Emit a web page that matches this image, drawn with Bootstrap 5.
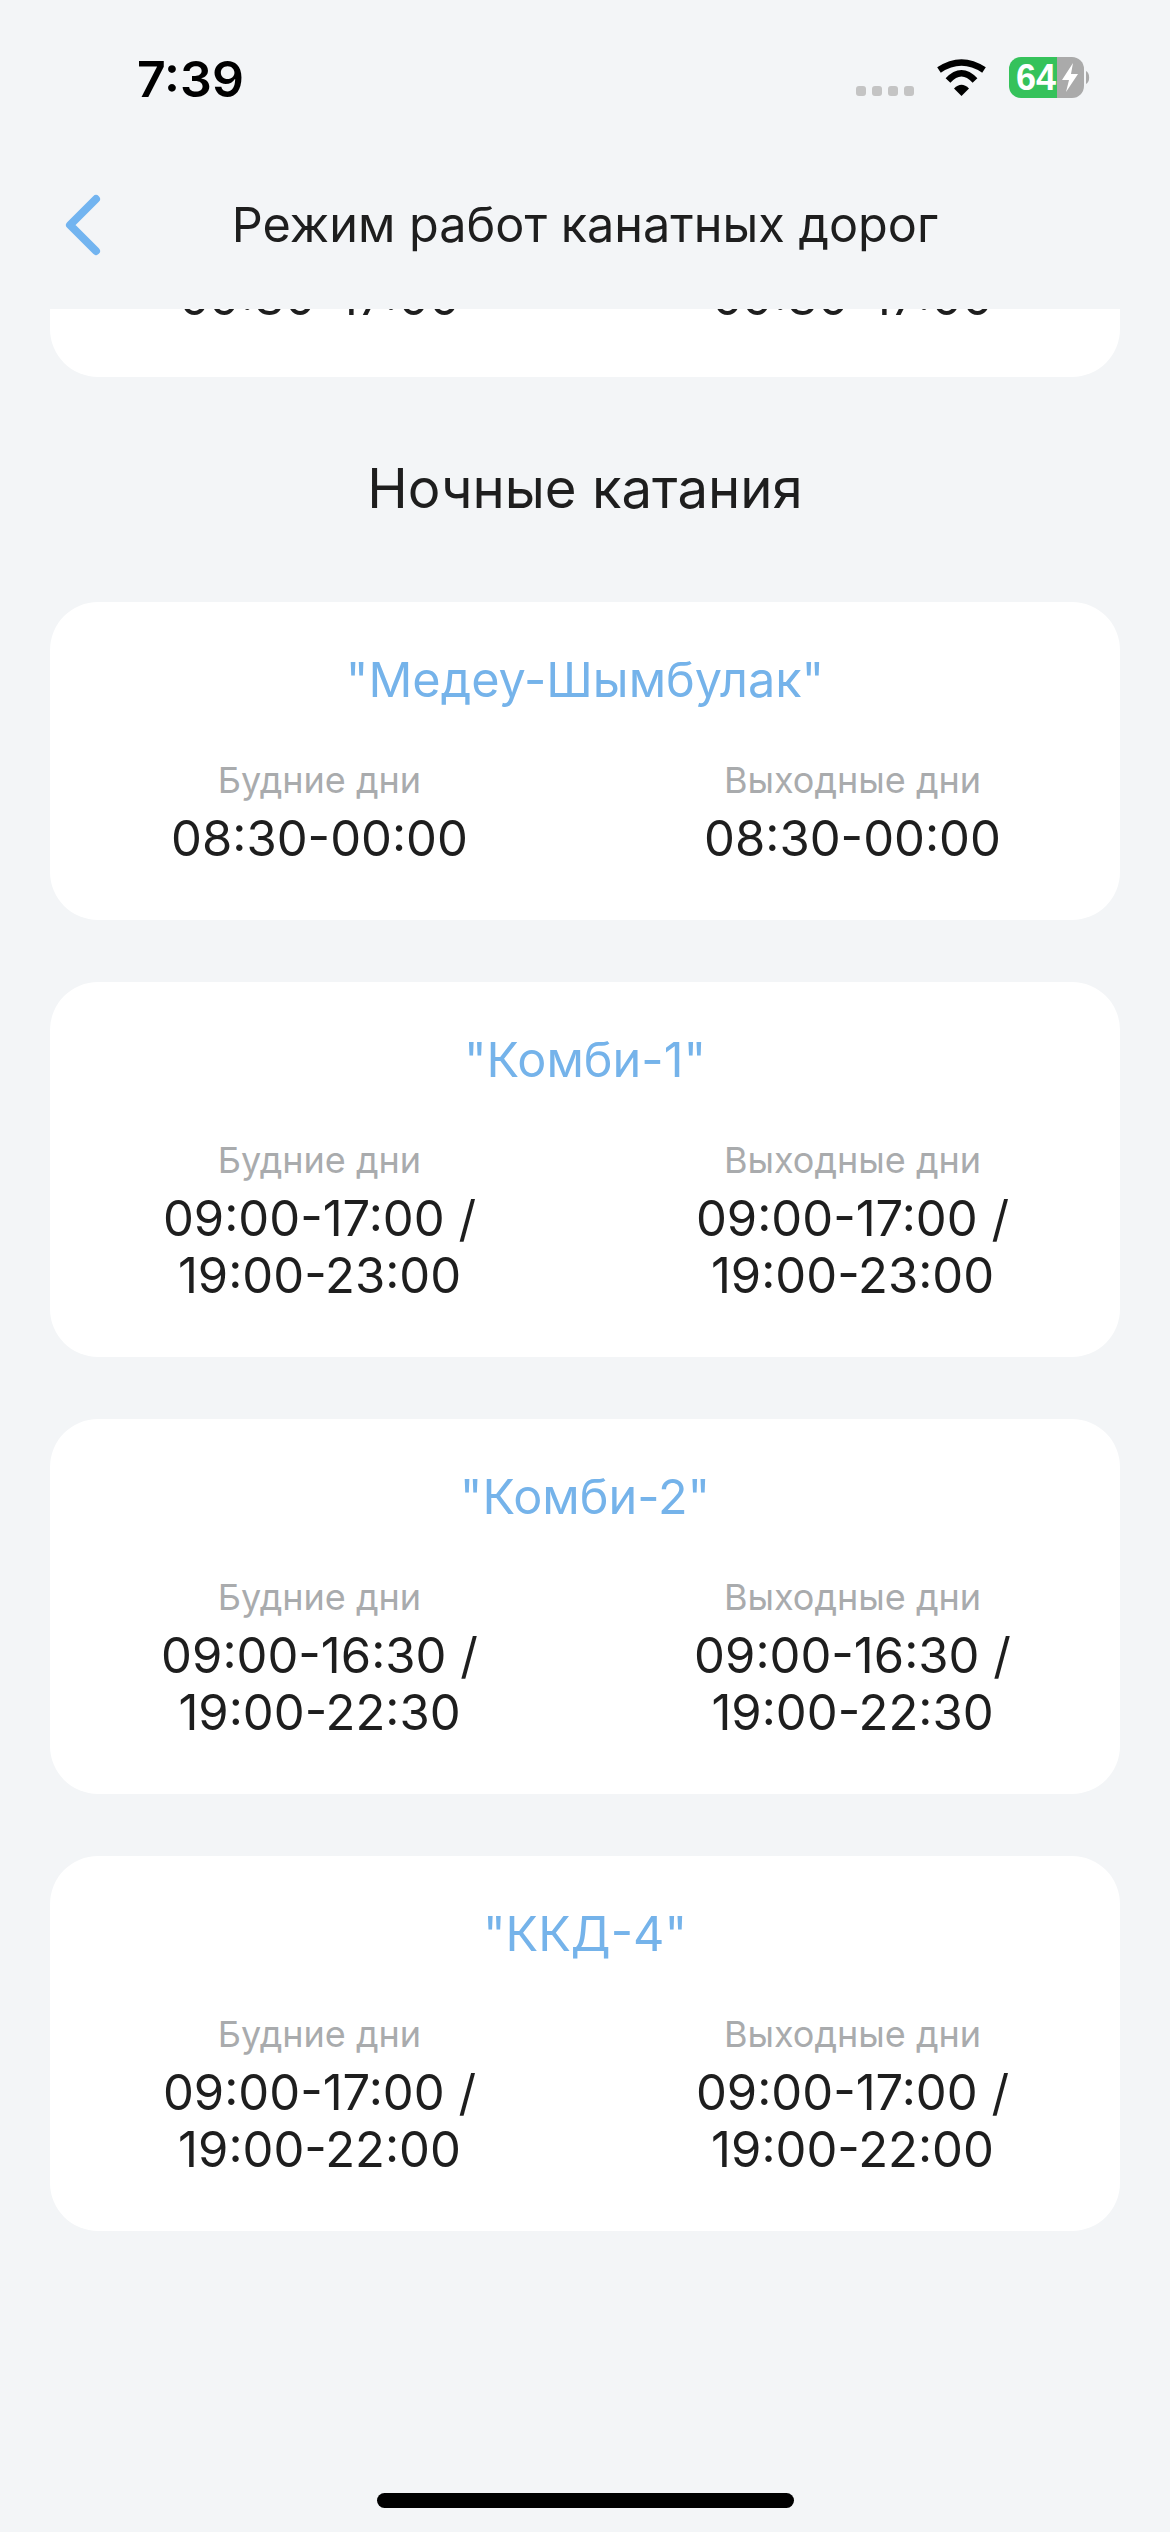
<!DOCTYPE html>
<html lang="ru">
<head>
    <meta charset="UTF-8">
    <title>Режим работ канатных дорог</title>
    <link href="https://cdn.jsdelivr.net/npm/bootstrap@5.3.0/dist/css/bootstrap.min.css" rel="stylesheet">
    <style>
        html, body { margin: 0; height: 2532px; overflow: hidden; }
        body { font-family: Inter, "Noto Sans", sans-serif; background-color: #f3f5f7; color: #1e1e1e; }
        .app-screen { width: 1170px; height: 2532px; }
        .status-bar { height: 150px; padding: 0 78px 0 137px; }
        .clock { font-size: 50px; font-weight: 600; color: #000; line-height: 1; margin-top: 54px; }
        .status-icons { margin-top: 56px; }
        .top-bar { height: 159px; padding-bottom: 9px; }
        .back-btn { left: 62px; top: 42px; }
        .top-title { font-size: 48.600px; line-height: 56px; margin: 0; font-weight: 400; }
        .scroll-area { padding: 0 50px; }
        .hours-card { background: #fff; border-radius: 48px; margin-bottom: 62px; padding: 49px 0 53px; }
        .hours-card-cut { margin-top: -110px; height: 178px; padding: 62px 0 0; }
        .section-title { font-size: 54.500px; line-height: 60px; margin: 81px 0 84px; font-weight: 400; text-align: center; }
        .lift-name { font-size: 48.600px; line-height: 58px; color: #75b3ea; text-align: center; margin-bottom: 49px; }
        .day-label { font-size: 36px; line-height: 44px; color: #a9abad; }
        .day-time { font-size: 49px; line-height: 57px; margin-top: 8px; }
        .hours-col { width: 50%; padding: 0 60px; text-align: center; }
        .hours-col:first-child { padding-left: 64px; }
        .home-bar { left: 377px; top: 2493px; width: 417px; height: 15px; border-radius: 8px; background: #000; }
    </style>
</head>
<body>
<div class="app-screen d-flex flex-column position-relative">
    <div class="status-bar d-flex justify-content-between align-items-start flex-shrink-0">
        <div class="clock">7:39</div>
        <svg class="status-icons" width="236" height="44" viewBox="0 0 236 44">
            <g fill="#c4c4c4">
                <rect x="0" y="30" width="10" height="10" rx="3"/>
                <rect x="16" y="30" width="10" height="10" rx="3"/>
                <rect x="32" y="30" width="10" height="10" rx="3"/>
                <rect x="48" y="30" width="10" height="10" rx="3"/>
            </g>
            <g fill="none" stroke="#000" stroke-width="6.500">
                <path d="M83 14Q105.500 -1 128 14"/>
                <path d="M92 24.500Q105.500 10 119 24.500"/>
            </g>
            <path d="M98 32.500Q105.500 25 113 32.500L105.500 40z" fill="#000"/>
            <path d="M201 1h15a12 12 0 0 1 12 12v17a12 12 0 0 1-12 12h-15z" fill="#aaa"/>
            <path d="M201 1h-36a12 12 0 0 0-12 12v17a12 12 0 0 0 12 12h36z" fill="#35c25b"/>
            <path d="M230 15a5 7 0 0 1 0 13z" fill="#aaa"/>
            <text x="160" y="34" font-family="Liberation Sans, sans-serif" font-size="36" font-weight="700" fill="#fff">64</text>
            <path d="M217 7L206 24h7l-3 12L222 18h-7z" fill="#fff"/>
        </svg>
    </div>
    <div class="top-bar position-relative d-flex align-items-center justify-content-center flex-shrink-0">
        <svg class="back-btn position-absolute" width="42" height="66" viewBox="0 0 42 66">
            <path d="M34 7L8 33l26 26" fill="none" stroke="#72b4f0" stroke-width="8" stroke-linecap="round" stroke-linejoin="round"/>
        </svg>
        <h1 class="top-title">Режим работ канатных дорог</h1>
    </div>
    <div class="scroll-area flex-grow-1 overflow-hidden">
        <div class="hours-card hours-card-cut d-flex align-items-start">
            <div class="hours-col"><div class="day-time">09:30-17:00</div></div>
            <div class="hours-col"><div class="day-time">09:30-17:00</div></div>
        </div>
        <h2 class="section-title">Ночные катания</h2>

        <div class="hours-card">
            <div class="lift-name">"Медеу-Шымбулак"</div>
            <div class="d-flex">
                <div class="hours-col"><div class="day-label">Будние дни</div><div class="day-time">08:30-00:00</div></div>
                <div class="hours-col"><div class="day-label">Выходные дни</div><div class="day-time">08:30-00:00</div></div>
            </div>
        </div>
        <div class="hours-card">
            <div class="lift-name">"Комби-1"</div>
            <div class="d-flex">
                <div class="hours-col"><div class="day-label">Будние дни</div><div class="day-time">09:00-17:00 / 19:00-23:00</div></div>
                <div class="hours-col"><div class="day-label">Выходные дни</div><div class="day-time">09:00-17:00 / 19:00-23:00</div></div>
            </div>
        </div>
        <div class="hours-card">
            <div class="lift-name">"Комби-2"</div>
            <div class="d-flex">
                <div class="hours-col"><div class="day-label">Будние дни</div><div class="day-time">09:00-16:30 / 19:00-22:30</div></div>
                <div class="hours-col"><div class="day-label">Выходные дни</div><div class="day-time">09:00-16:30 / 19:00-22:30</div></div>
            </div>
        </div>
        <div class="hours-card">
            <div class="lift-name">"ККД-4"</div>
            <div class="d-flex">
                <div class="hours-col"><div class="day-label">Будние дни</div><div class="day-time">09:00-17:00 / 19:00-22:00</div></div>
                <div class="hours-col"><div class="day-label">Выходные дни</div><div class="day-time">09:00-17:00 / 19:00-22:00</div></div>
            </div>
        </div>
    </div>
    <div class="home-bar position-absolute"></div>
</div>
<script src="https://cdn.jsdelivr.net/npm/bootstrap@5.3.0/dist/js/bootstrap.bundle.min.js"></script>
</body>
</html>
